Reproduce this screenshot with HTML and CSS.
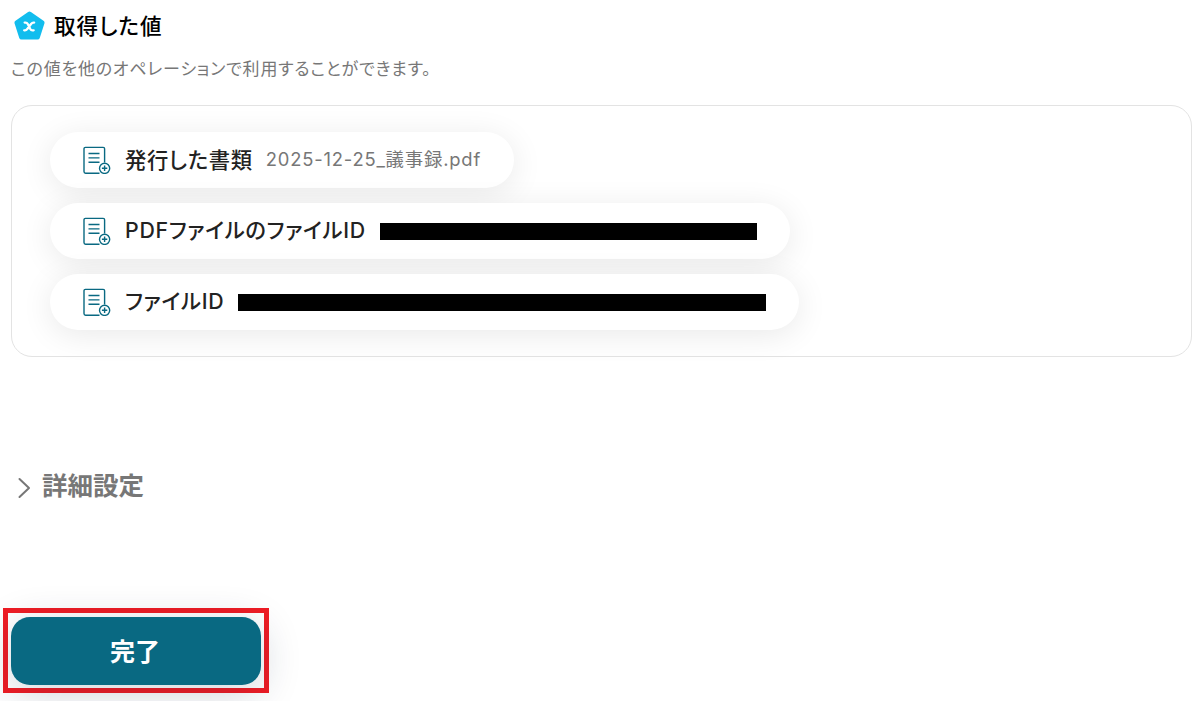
FILE: index.html
```html
<!DOCTYPE html>
<html lang="ja">
<head>
  <meta charset="UTF-8" />
  <meta name="viewport" content="width=device-width, initial-scale=1.0"/>
  <title>取得した値</title>
  <link rel="stylesheet" href="styles.css">
</head>
<body>

<svg class="defs" width="0" height="0">
  <symbol id="docIcon" viewBox="0 0 28 28">
    <path d="M16.5 27.2H2.6a1.6 1.6 0 0 1-1.6-1.6V2.8A1.4 1.4 0 0 1 2.4 1.4h17.8a1.4 1.4 0 0 1 1.4 1.4V16.500" />
    <path d="M5.500 7.500h11M5.500 11.900h11M5.500 16.300h11" />
    <circle cx="21.600" cy="22.300" r="5.100" />
    <path d="M18.900 22.300h5.400M21.600 19.600v5.400" />
  </symbol>
</svg>

<main class="page">
  <header class="header">
    <svg class="logo" viewBox="0 0 32 30">
      <path d="M16 2.5 29 11.700 24.200 26.500H7.800L3 11.700z" fill="#12bdee" stroke="#12bdee" stroke-width="5" stroke-linejoin="round" />
      <path class="logo-x" d="M11 11.500h1c1 0 1.700.5 2.200 1.400l2.600 5.200c.5.900 1.200 1.400 2.200 1.400h1.300M20.800 11.500h-.8c-1 0-1.700.5-2.400 1.400l-3.900 5.200c-.7.900-1.400 1.400-2.400 1.400h-.8" />
    </svg>
    <h1>取得した値</h1>
  </header>
  <p class="description">この値を他のオペレーションで利用することができます。</p>

  <section class="values">
    <div class="pill">
      <svg class="doc"><use href="#docIcon" /></svg>
      <span class="label">発行した書類</span>
      <span class="value">2025-12-25_議事録.pdf</span>
    </div>
    <div class="pill">
      <svg class="doc"><use href="#docIcon" /></svg>
      <span class="label label-id">PDFファイルのファイルID</span>
      <span class="mask mask-pdf"></span>
    </div>
    <div class="pill">
      <svg class="doc"><use href="#docIcon" /></svg>
      <span class="label label-id">ファイルID</span>
      <span class="mask mask-file"></span>
    </div>
  </section>

  <div class="advanced">
    <svg class="chevron" viewBox="0 0 14 22"><path d="M2.5 2 12 11 2.5 20" /></svg>
    <h2>詳細設定</h2>
  </div>

  <div class="highlight">
    <button class="done-btn">完了</button>
  </div>
</main>

</body>
</html>
```
FILE: styles.css
```css
* {
  margin: 0;
  padding: 0;
  box-sizing: border-box;
}

body {
  height: 701px;
  overflow: hidden;
  background: #fff;
  font-family: Inter, "Noto Sans CJK JP", sans-serif;
  font-feature-settings: "palt";
}

.defs {
  position: absolute;
}

.page {
  padding: 10px 8px 0 11px;
}

.header {
  display: flex;
  align-items: center;
  height: 32px;
  padding-left: 3px;
}

.logo {
  width: 31px;
  height: 30px;
  margin-right: 9px;
}

.logo-x {
  fill: none;
  stroke: #fff;
  stroke-width: 2.4;
  stroke-linecap: round;
}

h1 {
  font-size: 21.6px;
  font-weight: 500;
  line-height: 32px;
  letter-spacing: 1px;
  color: #000;
}

.description {
  height: 26px;
  margin-top: 14px;
  font-size: 17px;
  line-height: 26px;
  letter-spacing: 0.78px;
  color: #777;
  white-space: nowrap;
}

.values {
  display: flex;
  flex-direction: column;
  align-items: flex-start;
  gap: 15px;
  height: 252px;
  margin-top: 23px;
  padding: 26px 38px;
  border: 1px solid #e3e3e3;
  border-radius: 21px;
}

.pill {
  display: flex;
  align-items: center;
  height: 56px;
  padding: 0 33px;
  border-radius: 28px;
  background: #fff;
  box-shadow: 0 5px 32px rgba(0, 0, 0, 0.09);
}

.doc {
  width: 28px;
  height: 28px;
  margin-right: 14px;
  fill: none;
  stroke: #096982;
  stroke-width: 1.4;
}

.label {
  padding-bottom: 4px;
  font-size: 21.3px;
  font-weight: 500;
  letter-spacing: 0.72px;
  color: #222;
  white-space: nowrap;
}

.label-id {
  padding-bottom: 6px;
}

.value {
  margin-left: 13px;
  padding-bottom: 4px;
  font-size: 18.4px;
  letter-spacing: 0.8px;
  color: #777;
  white-space: nowrap;
}

.mask {
  height: 17px;
  margin-left: 14px;
  background: #000;
}

.mask-pdf {
  width: 377px;
}

.mask-file {
  width: 528px;
}

.advanced {
  display: flex;
  align-items: center;
  height: 38px;
  margin-top: 110px;
  padding-left: 6px;
}

.chevron {
  width: 14px;
  height: 22px;
  margin: 3px 11px 0 0;
  fill: none;
  stroke: #777;
  stroke-width: 2;
  stroke-linecap: round;
  stroke-linejoin: round;
}

h2 {
  font-size: 25.5px;
  font-weight: 700;
  line-height: 38px;
  color: #777;
}

.highlight {
  width: 266px;
  height: 85px;
  margin: 103px 0 0 -8px;
  padding: 4px 3px;
  border: 5px solid #ef1c24;
}

.done-btn {
  display: block;
  width: 250px;
  height: 68px;
  padding: 0 2px 2px 0;
  border: none;
  border-radius: 19px;
  background: #096982;
  color: #fff;
  font: inherit;
  font-size: 25px;
  font-weight: 700;
  box-shadow: 0 8px 40px rgba(20, 40, 70, 0.2);
  cursor: pointer;
}
```
